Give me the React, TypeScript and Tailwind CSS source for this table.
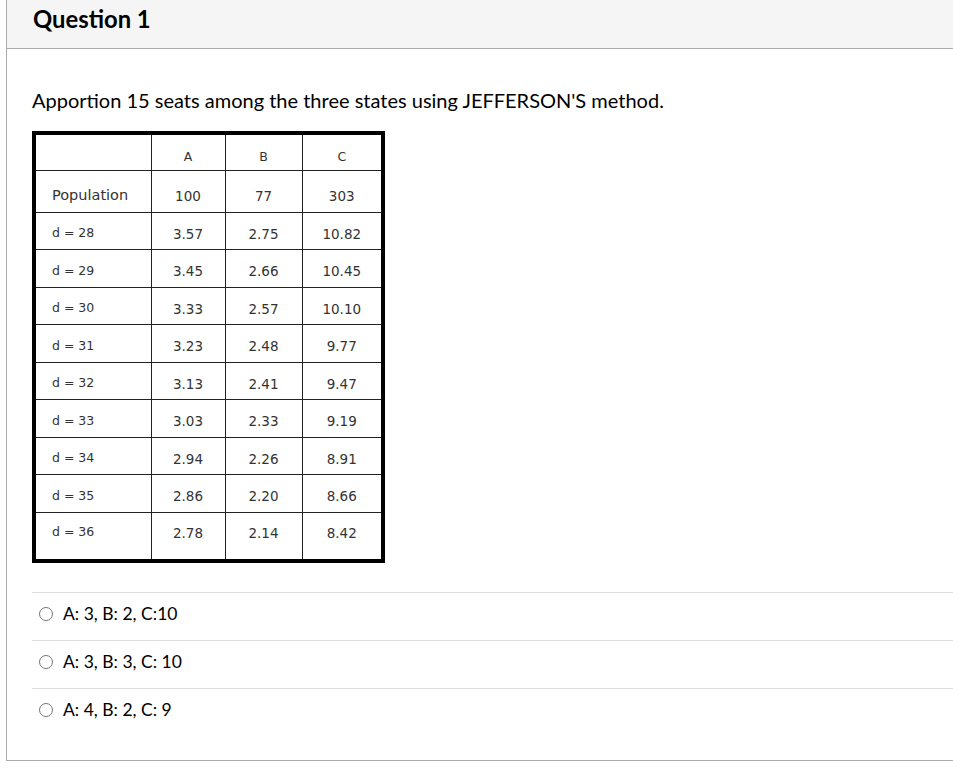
import React from "react";

const rows = [
  { label: "d = 28", a: "3.57", b: "2.75", c: "10.82" },
  { label: "d = 29", a: "3.45", b: "2.66", c: "10.45" },
  { label: "d = 30", a: "3.33", b: "2.57", c: "10.10" },
  { label: "d = 31", a: "3.23", b: "2.48", c: "9.77" },
  { label: "d = 32", a: "3.13", b: "2.41", c: "9.47" },
  { label: "d = 33", a: "3.03", b: "2.33", c: "9.19" },
  { label: "d = 34", a: "2.94", b: "2.26", c: "8.91" },
  { label: "d = 35", a: "2.86", b: "2.20", c: "8.66" },
  { label: "d = 36", a: "2.78", b: "2.14", c: "8.42" },
];

const answers = ["A: 3, B: 2, C:10", "A: 3, B: 3, C: 10", "A: 4, B: 2, C: 9"];

const cell = "border border-[#222] text-center align-middle";

export default function App() {
  return (
    <div className="min-h-[775px] bg-white font-['Lato',_'Liberation_Sans',_sans-serif] text-[#2d3b45]">
      <div className="ml-[6px] w-[947px] h-[761px] border-l border-b border-[#aaaaaa]">
        <div className="h-[49px] bg-[#f5f5f5] border-b border-[#aaaaaa] pl-[26px] pt-[4px]">
          <h2 className="text-[23.8px] font-bold text-black leading-[30px]">Question 1</h2>
        </div>

        <div className="pl-[25px]">
          <p className="mt-[39px] text-[20px] leading-[24px] text-black">
            Apportion 15 seats among the three states using JEFFERSON'S method.
          </p>

          <table className="mt-[19px] border-collapse border-[4px] border-black font-['DejaVu_Sans',_'Verdana',_sans-serif] text-[13.5px] text-[#333]">
            <colgroup>
              <col className="w-[117px]" />
              <col className="w-[74px]" />
              <col className="w-[77px]" />
              <col className="w-[81px]" />
            </colgroup>
            <tbody>
              <tr className="h-[37px]">
                <td className={cell}></td>
                <td className={`${cell} pt-[10px] text-[12.5px]`}>A</td>
                <td className={`${cell} pt-[10px] text-[12.5px]`}>B</td>
                <td className={`${cell} pt-[10px] text-[12.5px]`}>C</td>
              </tr>
              <tr className="h-[42px]">
                <td className={`${cell} !text-left pl-[16px] pt-[10px] text-[14.5px]`}>Population</td>
                <td className={`${cell} pt-[10px]`}>100</td>
                <td className={`${cell} pt-[10px]`}>77</td>
                <td className={`${cell} pt-[10px]`}>303</td>
              </tr>
              {rows.map((row, i) => {
                const last = i === rows.length - 1;
                const pad = last ? "pb-[6px]" : "pt-[6px]";
                return (
                  <tr key={i} className={last ? "h-[49px]" : "h-[37.5px]"}>
                    <td className={`${cell} !text-left pl-[16px] text-[12.5px] ${pad}`}>{row.label}</td>
                    <td className={`${cell} ${pad}`}>{row.a}</td>
                    <td className={`${cell} ${pad}`}>{row.b}</td>
                    <td className={`${cell} ${pad}`}>{row.c}</td>
                  </tr>
                );
              })}
            </tbody>
          </table>

          <div className="mt-[29px]">
            {answers.map((a, i) => (
              <div key={i} className="h-[48px] border-t border-[#dddddd] flex items-center pl-[7px] pb-[6px]">
                <span className="w-[14px] h-[14px] rounded-full border border-[#777] bg-white" />
                <span className="ml-[10px] text-[17.5px] text-black leading-none">{a}</span>
              </div>
            ))}
          </div>
        </div>
      </div>
    </div>
  );
}
